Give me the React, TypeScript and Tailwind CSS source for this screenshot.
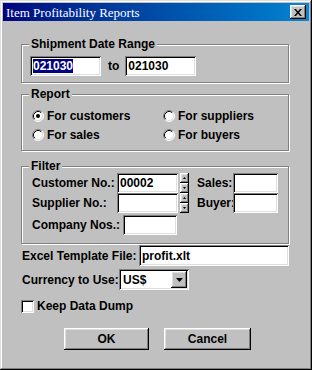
import React from 'react';

const sunken =
  'bg-white shadow-[inset_1px_1px_#808080,inset_-1px_-1px_#fff,inset_2px_2px_#000,inset_-2px_-2px_#dfdfdf]';
const raised =
  'bg-[#c0c0c0] shadow-[inset_-1px_-1px_#000,inset_1px_1px_#fff,inset_-2px_-2px_#808080,inset_2px_2px_#dfdfdf]';

const GroupBox: React.FC<{ title: string; className?: string; children?: React.ReactNode }> = ({
  title,
  className = '',
  children,
}) => (
  <div className={`relative border border-[#808080] shadow-[1px_1px_#fff,inset_1px_1px_#fff] ${className}`}>
    <span className="absolute -top-[8px] left-[7px] bg-[#c0c0c0] px-[2px] leading-[14px]">{title}</span>
    {children}
  </div>
);

const TextBox: React.FC<{ className?: string; children?: React.ReactNode }> = ({ className = '', children }) => (
  <div className={`flex items-center pl-[3px] leading-[14px] ${sunken} ${className}`}>{children}</div>
);

const Radio: React.FC<{ checked?: boolean; label: string }> = ({ checked, label }) => (
  <div className="flex items-center h-[19px]">
    <svg width="12" height="12" viewBox="0 0 12 12" className="shrink-0">
      <circle cx="6" cy="6" r="5" fill="#fff" />
      <path d="M2.11 9.89 A5.5 5.5 0 0 1 9.89 2.11" fill="none" stroke="#808080" strokeWidth="1" />
      <path d="M2.82 9.18 A4.5 4.5 0 0 1 9.18 2.82" fill="none" stroke="#000" strokeWidth="1" />
      <path d="M9.89 2.11 A5.5 5.5 0 0 1 2.11 9.89" fill="none" stroke="#fff" strokeWidth="1" />
      <path d="M9.18 2.82 A4.5 4.5 0 0 1 2.82 9.18" fill="none" stroke="#dfdfdf" strokeWidth="1" />
      {checked && <circle cx="6" cy="6" r="2" fill="#000" />}
    </svg>
    <span className="ml-[3px]">{label}</span>
  </div>
);

const Spinner = () => (
  <div className="flex flex-col w-[9px] h-[20px] ml-[2px]">
    <div className={`h-[10px] flex items-center justify-center ${raised}`}>
      <svg width="3" height="2" viewBox="0 0 3 2">
        <path d="M1.5 0 L3 2 L0 2 Z" fill="#000" />
      </svg>
    </div>
    <div className={`h-[10px] flex items-center justify-center ${raised}`}>
      <svg width="3" height="2" viewBox="0 0 3 2">
        <path d="M0 0 L3 0 L1.5 2 Z" fill="#000" />
      </svg>
    </div>
  </div>
);

export default function App() {
  return (
    <div className="w-[312px] h-[370px] bg-[#c0c0c0] p-[3px] text-black text-[12px] font-bold font-['Liberation_Sans',Arial,sans-serif] shadow-[inset_-1px_-1px_#000,inset_1px_1px_#dfdfdf,inset_-2px_-2px_#808080,inset_2px_2px_#fff]">
      {/* title bar */}
      <div className="h-[18px] flex items-center justify-between pl-[3px] pr-[3px] bg-linear-to-r from-[#000080] to-[#1084d0]">
        <span className="text-white font-normal text-[13px] font-['Liberation_Serif','Times_New_Roman',serif] leading-[15px]">
          Item Profitability Reports
        </span>
        <div className={`w-[16px] h-[14px] flex items-center justify-center ${raised}`}>
          <svg width="8" height="7" viewBox="0 0 8 7">
            <path d="M0 0 L2 0 L4 2.5 L6 0 L8 0 L5 3.5 L8 7 L6 7 L4 4.5 L2 7 L0 7 L3 3.5 Z" fill="#000" />
          </svg>
        </div>
      </div>

      <div className="pl-[18px] pr-[20px] pt-[23px]">
        <GroupBox title="Shipment Date Range" className="h-[39px] pt-[11px] pl-[8px]">
          <div className="flex items-center">
            <TextBox className="w-[71px] h-[20px] pl-[2px]">
              <span className="bg-[#000080] text-white">021030</span>
            </TextBox>
            <span className="ml-[7px] mr-[6px]">to</span>
            <TextBox className="w-[71px] h-[20px] pl-[2px]">021030</TextBox>
          </div>
        </GroupBox>

        <GroupBox title="Report" className="mt-[11px] h-[57px] pt-[11px] pl-[10px]">
          <div className="grid grid-cols-[131px_1fr]">
            <Radio checked label="For customers" />
            <Radio label="For suppliers" />
            <Radio label="For sales" />
            <Radio label="For buyers" />
          </div>
        </GroupBox>

        <GroupBox title="Filter" className="mt-[15px] h-[78px] pt-[6px] pl-[10px]">
          <div className="flex items-center h-[20px]">
            <span className="w-[85px]">Customer No.:</span>
            <TextBox className="w-[61px] h-[20px]">00002</TextBox>
            <Spinner />
            <span className="ml-[8px] w-[36px]">Sales:</span>
            <TextBox className="w-[45px] h-[20px]" />
          </div>
          <div className="flex items-center h-[20px]">
            <span className="w-[85px]">Supplier No.:</span>
            <TextBox className="w-[61px] h-[20px]" />
            <Spinner />
            <span className="ml-[8px] w-[36px]">Buyer:</span>
            <TextBox className="w-[45px] h-[20px]" />
          </div>
          <div className="flex items-center h-[20px] mt-[2px]">
            <span className="w-[91px]">Company Nos.:</span>
            <TextBox className="w-[54px] h-[20px]" />
          </div>
        </GroupBox>

        <div className="flex items-center mt-[1px]">
          <span className="w-[118px] pl-[1px]">Excel Template File:</span>
          <TextBox className="flex-1 h-[21px]">profit.xlt</TextBox>
        </div>

        <div className="flex items-center mt-[3px]">
          <span className="w-[98px] pl-[1px]">Currency to Use:</span>
          <div className={`flex items-center w-[70px] h-[21px] pl-[4px] pr-[2px] ${sunken}`}>
            <span className="flex-1">US$</span>
            <div className={`w-[16px] h-[17px] flex items-center justify-center ${raised}`}>
              <svg width="7" height="4" viewBox="0 0 7 4">
                <path d="M0 0 L7 0 L3.5 4 Z" fill="#000" />
              </svg>
            </div>
          </div>
        </div>

        <div className="flex items-center mt-[7px]">
          <div className={`w-[13px] h-[13px] ${sunken}`} />
          <span className="ml-[3px]">Keep Data Dump</span>
        </div>

        <div className="flex mt-[13px] pl-[43px]">
          <button className={`w-[85px] h-[22px] ${raised}`}>OK</button>
          <button className={`ml-[15px] w-[87px] h-[22px] ${raised}`}>Cancel</button>
        </div>
      </div>
    </div>
  );
}
